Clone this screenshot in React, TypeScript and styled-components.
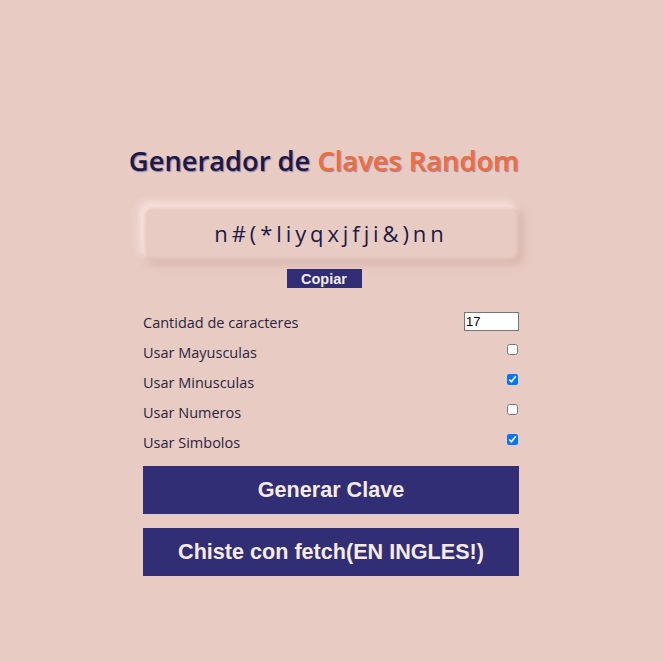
import styled, { createGlobalStyle } from 'styled-components';

const GlobalStyle = createGlobalStyle`
  html, body {
    margin: 0;
    background-color: #e8cbc3;
  }
  body {
    font-family: 'Open Sans', sans-serif;
  }
`;

const Page = styled.main`
  min-height: 662px;
  display: flex;
  justify-content: center;
  padding: 140px 1px 0 0;
  box-sizing: border-box;
`;

const Container = styled.div`
  width: 376px;
  display: flex;
  flex-direction: column;
  align-items: center;
`;

const Title = styled.h1`
  margin: 0 0 24px;
  width: 420px;
  font-family: 'Open Sans', sans-serif;
  font-size: 27.3px;
  font-weight: 600;
  color: #1c1a45;
  text-align: center;
  white-space: nowrap;
  transform: translateX(-7px);
  text-shadow: 1px 1px 1px rgba(70, 60, 140, 0.55);
  line-height: 42px;
`;

const Accent = styled.span`
  color: #ee6d3c;
`;

const Display = styled.div`
  width: 100%;
  height: 54px;
  border-radius: 8px;
  display: flex;
  align-items: center;
  justify-content: center;
  background: #e8cbc3;
  box-shadow: -4px -4px 8px rgba(255, 240, 235, 0.7),
    4px 4px 8px rgba(190, 150, 140, 0.45),
    inset 2px 2px 3px rgba(255, 240, 235, 0.5),
    inset -2px -2px 3px rgba(200, 165, 155, 0.35);
  font-family: 'Open Sans', sans-serif;
  font-size: 22px;
  letter-spacing: 3.9px;
  color: #1c1a45;
`;

const SmallButton = styled.button`
  margin: 9px 14px 0 0;
  width: 75px;
  height: 19px;
  border: none;
  padding: 0;
  background: #312e76;
  color: #f6ece6;
  font-family: 'Liberation Sans', Arial, sans-serif;
  font-weight: bold;
  font-size: 14.5px;
`;

const Options = styled.div`
  width: 100%;
  margin-top: 19px;
  display: flex;
  flex-direction: column;
`;

const Row = styled.label`
  height: 30px;
  display: flex;
  justify-content: space-between;
  align-items: center;
  font-family: 'Open Sans', sans-serif;
  font-size: 14.5px;
  color: #2a2540;
`;

const NumberInput = styled.input`
  width: 55px;
  height: 19px;
  box-sizing: border-box;
  border: 1px solid #767676;
  background: #fff;
  font-family: 'Liberation Sans', Arial, sans-serif;
  font-size: 13px;
  padding: 0 1px;
  margin: 0 0 2px;
`;

const Check = styled.input`
  width: 11px;
  height: 11px;
  margin: 0 1px 6px 0;
`;

const BigButton = styled.button<{ $first?: boolean }>`
  width: 100%;
  height: 48px;
  margin-top: ${({ $first }) => ($first ? '9px' : '14px')};
  border: none;
  background: #312e76;
  color: #f6ebe2;
  font-family: 'Liberation Sans', Arial, sans-serif;
  font-weight: bold;
  font-size: 21.6px;
`;

const options = [
  { label: 'Usar Mayusculas', checked: false },
  { label: 'Usar Minusculas', checked: true },
  { label: 'Usar Numeros', checked: false },
  { label: 'Usar Simbolos', checked: true },
];

export default function App() {
  return (
    <>
      <GlobalStyle />
      <Page>
        <Container>
          <Title>
            Generador de <Accent>Claves Random</Accent>
          </Title>
          <Display>n#(*liyqxjfji&amp;)nn</Display>
          <SmallButton>Copiar</SmallButton>
          <Options>
            <Row>
              Cantidad de caracteres
              <NumberInput type="text" defaultValue="17" />
            </Row>
            {options.map((o) => (
              <Row key={o.label}>
                {o.label}
                <Check type="checkbox" defaultChecked={o.checked} />
              </Row>
            ))}
          </Options>
          <BigButton $first>Generar Clave</BigButton>
          <BigButton>Chiste con fetch(EN INGLES!)</BigButton>
        </Container>
      </Page>
    </>
  );
}
